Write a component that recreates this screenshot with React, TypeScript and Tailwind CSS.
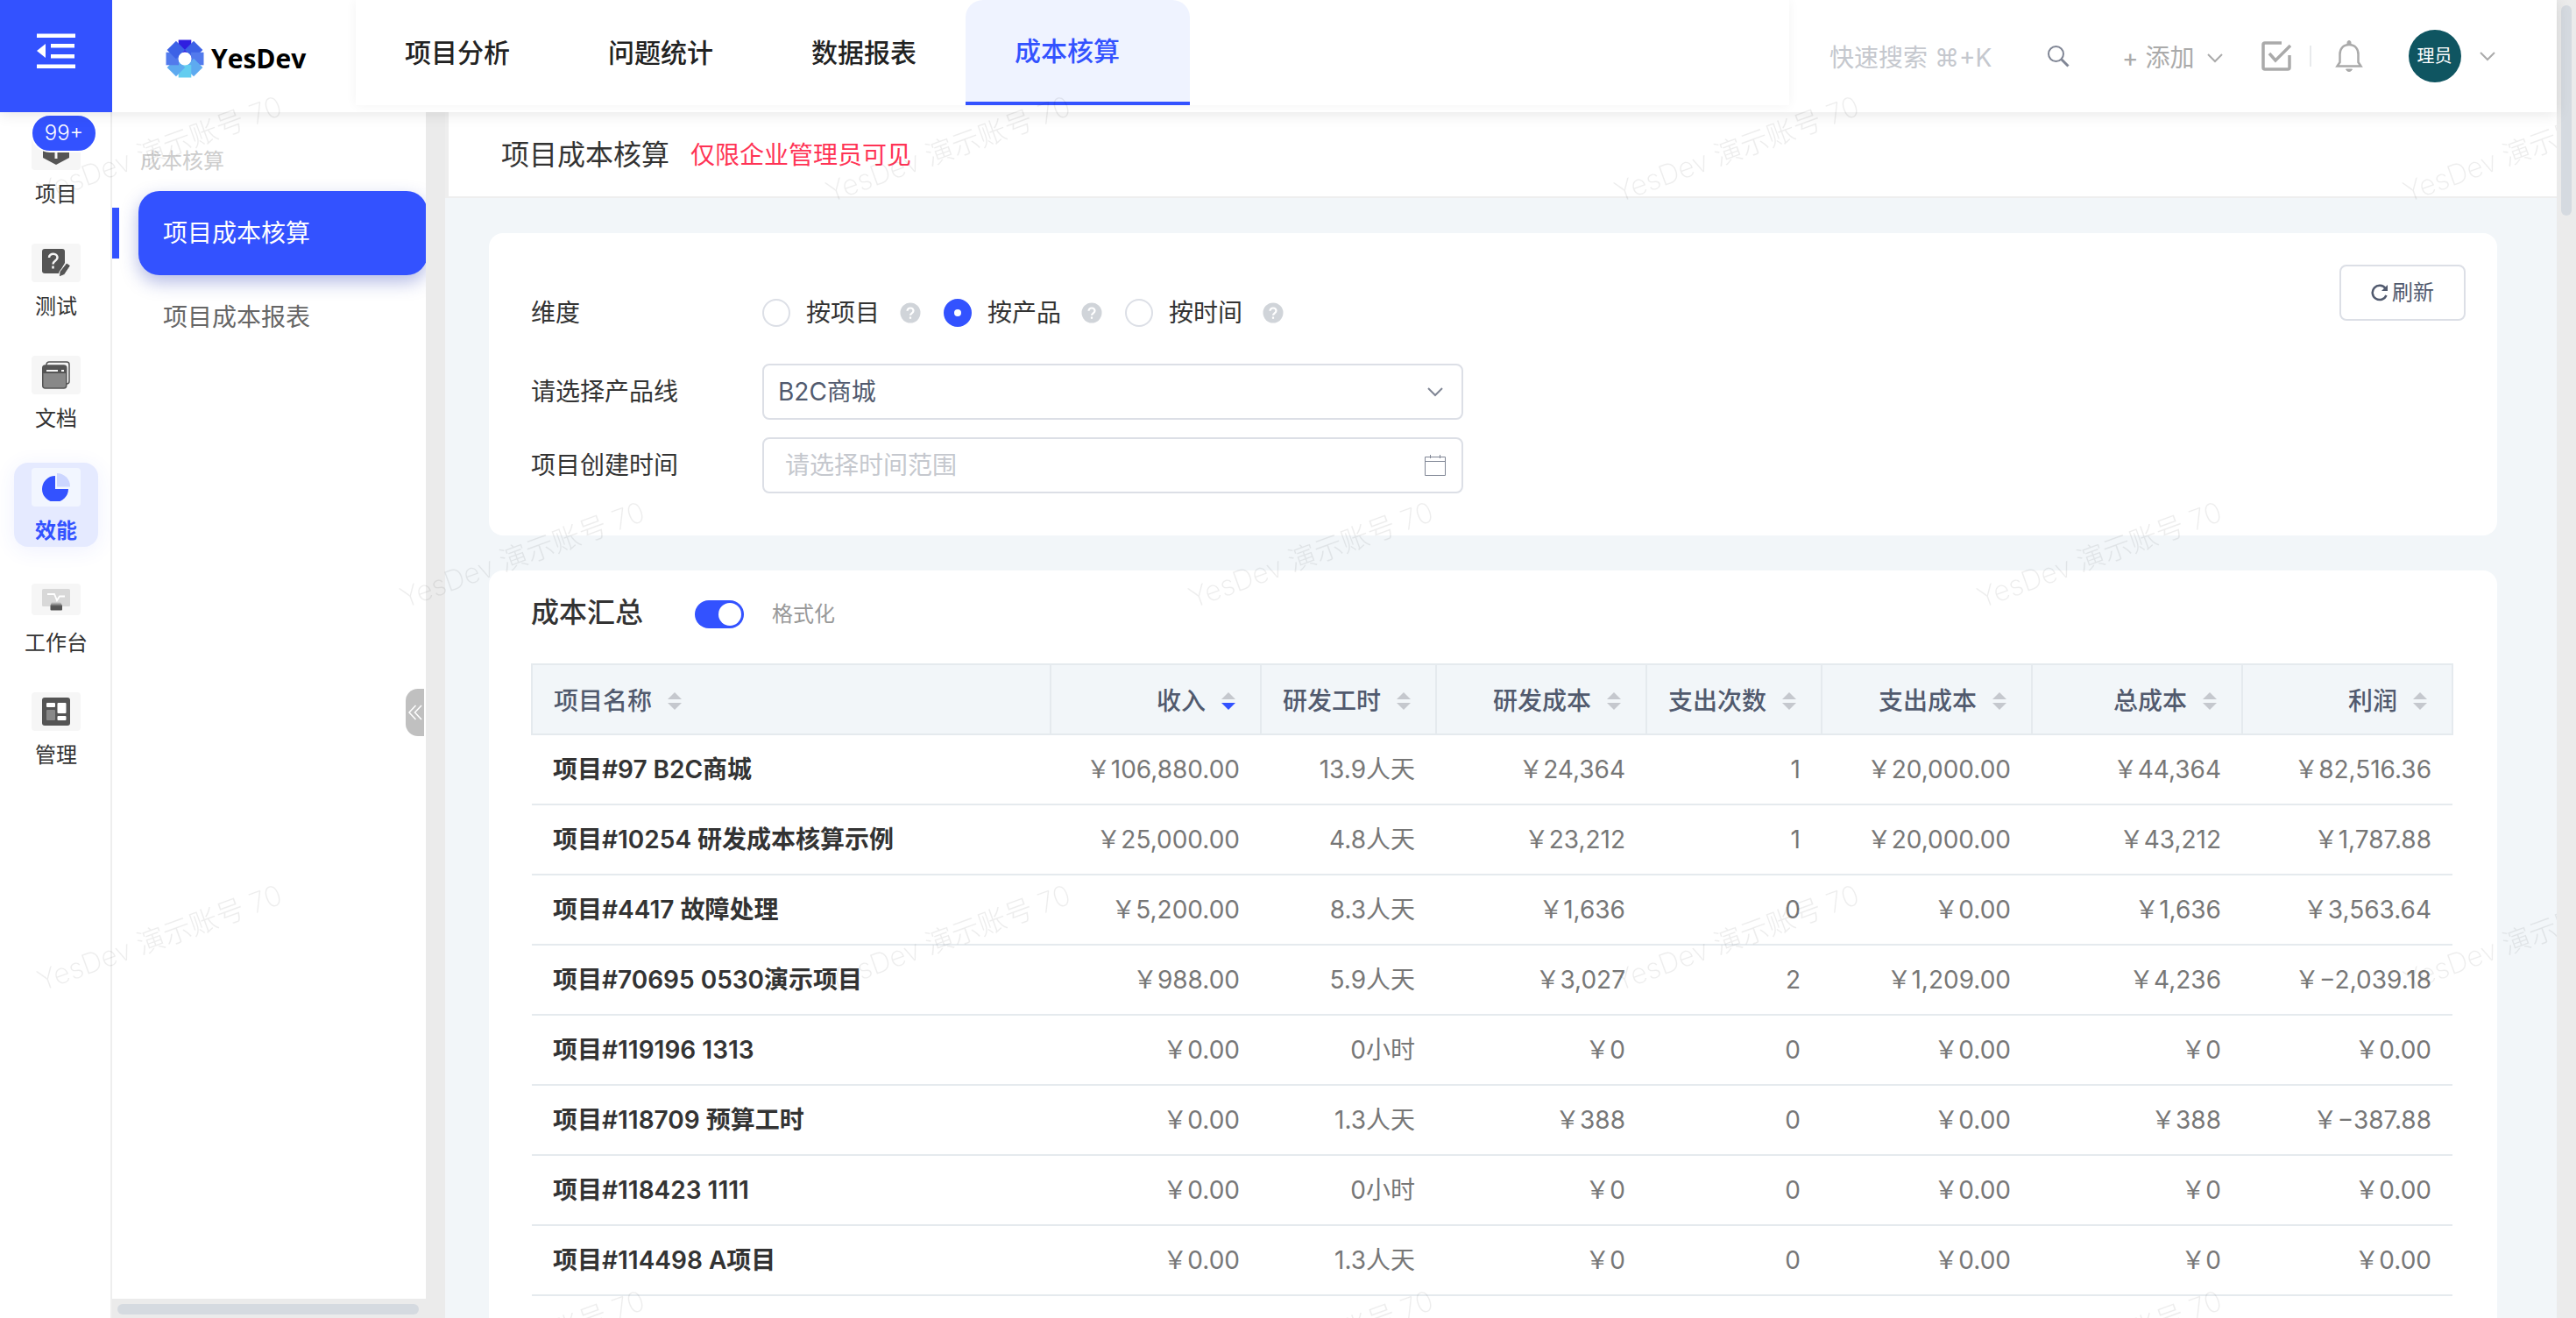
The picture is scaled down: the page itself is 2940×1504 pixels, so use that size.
import React from "react";

const NAV = ["项目分析", "问题统计", "数据报表"];

const COLUMNS = [
  { title: "项目名称", width: "w-auto" },
  { title: "收入", width: "w-[240px]" },
  { title: "研发工时", width: "w-[200px]" },
  { title: "研发成本", width: "w-[240px]" },
  { title: "支出次数", width: "w-[200px]" },
  { title: "支出成本", width: "w-[240px]" },
  { title: "总成本", width: "w-[240px]" },
  { title: "利润", width: "w-[240px]" },
];

const ROWS = [
  ["项目#97 B2C商城", "￥106,880.00", "13.9人天", "￥24,364", "1", "￥20,000.00", "￥44,364", "￥82,516.36"],
  ["项目#10254 研发成本核算示例", "￥25,000.00", "4.8人天", "￥23,212", "1", "￥20,000.00", "￥43,212", "￥1,787.88"],
  ["项目#4417 故障处理", "￥5,200.00", "8.3人天", "￥1,636", "0", "￥0.00", "￥1,636", "￥3,563.64"],
  ["项目#70695 0530演示项目", "￥988.00", "5.9人天", "￥3,027", "2", "￥1,209.00", "￥4,236", "￥−2,039.18"],
  ["项目#119196 1313", "￥0.00", "0小时", "￥0", "0", "￥0.00", "￥0", "￥0.00"],
  ["项目#118709 预算工时", "￥0.00", "1.3人天", "￥388", "0", "￥0.00", "￥388", "￥−387.88"],
  ["项目#118423 1111", "￥0.00", "0小时", "￥0", "0", "￥0.00", "￥0", "￥0.00"],
  ["项目#114498 A项目", "￥0.00", "1.3人天", "￥0", "0", "￥0.00", "￥0", "￥0.00"],
];

function Chevron({ className }: { className: string }) {
  return (
    <svg viewBox="0 0 18 12" className={className} fill="none" stroke="currentColor" strokeWidth="2" aria-hidden="true">
      <path d="M1 2l8 8 8-8" />
    </svg>
  );
}

function Logo() {
  const blades = ["#2f1fe0", "#3d62e6", "#527aec", "#5eaaf0", "#64cdf0", "#5eaaf0", "#527aec", "#3d62e6"];
  return (
    <svg viewBox="-22 -22 44 44" className="size-11" aria-hidden="true">
      {blades.map((c, i) => (
        <path key={i} d="M-7.300 -21.500H7.300V-7H-7.300Z" fill={c} transform={`rotate(${i * 45})`} />
      ))}
      <circle r="7.500" fill="#fff" />
    </svg>
  );
}

function Watermark() {
  return (
    <svg className="pointer-events-none fixed inset-y-0 left-0 z-50 h-full w-full pr-[22px]" aria-hidden="true">
      <defs>
        <pattern id="wm" width="900" height="900" patternUnits="userSpaceOnUse">
          <g className="font-extralight" fontSize="32" fill="#000" fillOpacity="0.07">
            <text transform="translate(48 231) rotate(-20)">YesDev 演示账号 70</text>
            <text transform="translate(462 694) rotate(-20)">YesDev 演示账号 70</text>
          </g>
        </pattern>
      </defs>
      <rect width="100%" height="100%" fill="url(#wm)" />
    </svg>
  );
}

const railIcons: Record<string, React.ReactNode> = {
  项目: (
    <g>
      <path d="M1 8L16 1l15 7v16L16 32 1 24z" fill="#555" />
      <path d="M16 14v11" stroke="#f6f6f6" strokeWidth="3" />
    </g>
  ),
  测试: (
    <g>
      <path d="M3 0h20a3 3 0 013 3v13l-7 12H3a3 3 0 01-3-3V3a3 3 0 013-3z" fill="#555" />
      <path d="M8 10c0-6 10-5.500 9.500 0 0 3.500-5 3.500-5 7.500M12.500 19.500v3" stroke="#f6f6f6" strokeWidth="2.500" fill="none" />
      <path d="M28 16l4.500 3-7 10.500-6 2.500.5-6z" fill="#555" stroke="#f6f6f6" strokeWidth="1" />
    </g>
  ),
  文档: (
    <g>
      <path d="M5 5V4a3 3 0 013-3h20a3 3 0 013 3v19a3 3 0 01-3 3h-1" fill="none" stroke="#555" strokeWidth="1.500" />
      <rect x="0.750" y="5" width="27" height="26" rx="3" fill="#888" stroke="#555" strokeWidth="1.500" />
      <path d="M1 14V8a3 3 0 013-3h21a3 3 0 013 3v6z" fill="#555" />
      <path d="M5 11h13M22 11h3" stroke="#f6f6f6" strokeWidth="2" />
    </g>
  ),
  效能: (
    <g>
      <path d="M15 3v15h15A15 15 0 1115 3z" fill="#3352ff" />
      <path d="M17 0a15 15 0 0115 15.500H17z" fill="#ccd6ff" />
    </g>
  ),
  工作台: (
    <g>
      <defs>
        <linearGradient id="stand" x1="0" x2="0" y1="0" y2="1">
          <stop offset="0" stopColor="#d8d8d8" />
          <stop offset="0.500" stopColor="#555" />
        </linearGradient>
      </defs>
      <rect x="0" y="4" width="32" height="20" rx="1.500" fill="#d8d8d8" />
      <path d="M6 10h8l3 7 3-4.500h6" fill="none" stroke="#fff" strokeWidth="1.800" />
      <path d="M11 19h10l2 4v4.500q0 1-1 1H10.500q-1 0-1-1V23z" fill="url(#stand)" />
    </g>
  ),
  管理: (
    <g>
      <rect width="32" height="32" rx="3" fill="#555" />
      <rect x="5" y="6" width="10" height="5" rx="1" fill="#fff" />
      <rect x="5" y="14" width="10" height="12" rx="1" fill="#888" />
      <rect x="17.500" y="6" width="10" height="12" rx="1" fill="#fff" />
      <rect x="17.500" y="21" width="10" height="5" rx="1" fill="#fff" />
    </g>
  ),
};

function RailItem({ name, active }: { name: string; active?: boolean }) {
  return (
    <a
      href="#"
      className={
        active
          ? "flex h-24 w-24 flex-col items-center justify-between rounded-2xl bg-[#e5eaff] pt-1.5 text-2xl leading-9 font-bold text-[#3352ff] shadow-[0_4px_24px_rgba(51,82,255,0.08)]"
          : "flex h-24 w-24 flex-col items-center justify-between pt-1.5 text-2xl leading-9 text-[#333]"
      }
    >
      <span
        className={
          active
            ? "flex h-11 w-14 items-center justify-center rounded bg-[#f2f6ff]"
            : name === "工作台"
              ? "mt-1 flex h-9 w-14 items-center justify-center rounded bg-[#f6f6f6]"
              : "flex h-11 w-14 items-center justify-center rounded bg-[#f6f6f6]"
        }
      >
        <svg viewBox="0 0 32 32" className="size-8" aria-hidden="true">
          {railIcons[name]}
        </svg>
      </span>
      <span className="whitespace-nowrap">{name}</span>
    </a>
  );
}

function Header() {
  return (
    <header className="relative z-20 flex h-32 shrink-0 bg-white shadow-[0_2px_16px_rgba(0,0,0,0.1)]">
      <button className="flex w-32 shrink-0 justify-center bg-[#3352ff] pt-[37px]" aria-label="收起菜单">
        <svg viewBox="0 0 44 42" className="h-[42px] w-11" fill="#fff" aria-hidden="true">
          <path d="M0 1.500h44v4.500H0zM16 13h27v4.500H16zM16 25h27v4.500H16zM0 36.500h44V41H0zM0 21l10-8v16z" />
        </svg>
      </button>
      <a href="#" className="flex w-[278px] shrink-0 gap-2 pt-[45px] pl-[61px]">
        <Logo />
        <span className="font-['Open_Sans'] text-[30px] leading-[44px] font-bold text-black">YesDev</span>
      </a>
      <nav className="flex h-[120px] flex-1 text-[30px] font-medium shadow-[0_0_12px_rgba(0,0,0,0.05)]">
        {NAV.map((n) => (
          <a key={n} href="#" className="px-14 leading-[120px] text-[#222]">
            {n}
          </a>
        ))}
        <a
          href="#"
          aria-current="page"
          className="rounded-t-[20px] border-b-4 border-[#3352ff] bg-[#eff3ff] pr-20 pl-14 leading-[116px] text-[#3352ff]"
        >
          成本核算
        </a>
      </nav>
      <div className="flex h-32 w-[876px] shrink-0 items-center pl-[46px] text-[28px] text-[#aaa]">
        <input
          aria-label="快速搜索"
          placeholder="快速搜索 ⌘+K"
          className="w-[248px] pt-1 outline-none placeholder:text-[#c5c8ce]"
        />
        <svg viewBox="0 0 26 26" className="size-[26px]" fill="none" stroke="#808695" strokeWidth="2" aria-hidden="true">
          <circle cx="10.500" cy="10.500" r="8.500" />
          <path d="M16.500 16.500l8 8" strokeWidth="3" />
        </svg>
        <button className="ml-[60px] flex items-center pt-1">
          <span className="mr-2">+</span>添加
          <Chevron className="ml-3.5 h-3 w-[18px]" />
        </button>
        <button className="ml-11" aria-label="待办">
          <svg viewBox="0 0 34 34" className="size-[34px]" fill="none" stroke="#aaa" strokeWidth="3.500" aria-hidden="true">
            <path d="M23 2H4a2 2 0 00-2 2v26a2 2 0 002 2h26a2 2 0 002-2V16" />
            <path d="M9 14l7 8L33 5" />
          </svg>
        </button>
        <span className="ml-[21px] h-6 w-0.5 bg-[#e8eaec]" />
        <button className="ml-[27px]" aria-label="通知">
          <svg viewBox="0 0 32 36" className="h-9 w-8" fill="none" stroke="#aaa" strokeWidth="2.500" aria-hidden="true">
            <path d="M16 5C9 5 5.500 10 5.500 16v9l-3 4.500h27l-3-4.500v-9C26.500 10 23 5 16 5z" />
            <path d="M14 4.500V2.500a2 2 0 014 0v2zM12.500 33h7q-1 2.500-3.500 2.500T12.500 33z" fill="#aaa" strokeWidth="1" />
          </svg>
        </button>
        <button className="ml-[52px] flex items-center" aria-label="账号">
          <span className="size-[60px] rounded-full bg-[#0f5561] text-center text-xl leading-[60px] text-white">理员</span>
          <Chevron className="ml-[21px] h-3 w-[18px]" />
        </button>
      </div>
    </header>
  );
}

function Rail() {
  return (
    <aside className="flex w-32 shrink-0 flex-col items-center gap-8 border-r-2 border-[#eee] bg-white pt-4 pl-0.5">
      <div className="relative">
        <RailItem name="项目" />
        <span className="absolute -top-3.5 left-[19px] box-content h-10 w-[72px] rounded-full border-2 border-white bg-[#3352ff] text-center text-2xl leading-10 font-light text-white">
          99+
        </span>
      </div>
      <RailItem name="测试" />
      <RailItem name="文档" />
      <RailItem name="效能" active />
      <RailItem name="工作台" />
      <RailItem name="管理" />
    </aside>
  );
}

function SideMenu() {
  return (
    <aside className="flex w-[380px] shrink-0 flex-col bg-[#ebebeb]">
      <div className="relative mr-[22px] flex-1 overflow-hidden bg-white pt-[38px]">
        <h2 className="pl-8 text-2xl leading-9 text-[#ccc]">成本核算</h2>
        <div className="mt-4 flex items-center">
          <span className="h-[58px] w-2 bg-[#3352ff]" />
          <a
            href="#"
            aria-current="page"
            className="-mr-0.5 ml-[22px] h-24 flex-1 rounded-3xl bg-[#3352ff] pl-7 text-[28px] leading-[96px] text-white shadow-[0_8px_20px_rgba(40,60,180,0.35)]"
          >
            项目成本核算
          </a>
        </div>
        <a href="#" className="block h-24 pl-[58px] text-[28px] leading-[96px] text-[#666]">
          项目成本报表
        </a>
        <button
          aria-label="收起侧栏"
          className="absolute top-[658px] right-0.5 flex h-[54px] w-[21px] items-center justify-center rounded-l-[14px] bg-[#c0c0c0]"
        >
          <svg viewBox="0 0 16 18" className="h-[18px] w-4" fill="none" stroke="#fff" strokeWidth="1.500" aria-hidden="true">
            <path d="M8.500 1L1 9l7.500 8M15 1L7.500 9l7.500 8" />
          </svg>
        </button>
      </div>
      <div className="h-[22px] shrink-0 pt-1.5 pr-[30px] pl-1.5">
        <div className="h-3 rounded-full bg-[#d5dae0]" />
      </div>
    </aside>
  );
}

function Help() {
  return (
    <svg viewBox="0 0 24 24" className="ml-[23px] size-6" aria-hidden="true">
      <circle cx="12" cy="12" r="11.500" fill="#d0d4d9" />
      <path d="M8.500 9.800c0-4.500 7-4.300 7 0 0 2.400-3.500 2.600-3.500 5M12 16.500v2.300" fill="none" stroke="#fff" strokeWidth="2.200" />
    </svg>
  );
}

function Radio({ label, checked }: { label: string; checked?: boolean }) {
  return (
    <div className="flex items-center">
      <label className="flex items-center gap-[18px]">
        <input
          type="radio"
          name="dimension"
          defaultChecked={checked}
          className="size-8 appearance-none rounded-full border-2 border-[#dcdfe6] bg-white checked:border-[12px] checked:border-[#3352ff]"
        />
        {label}
      </label>
      <Help />
    </div>
  );
}

function FilterCard() {
  return (
    <section className="flex items-start justify-between rounded-2xl bg-white pt-9 pr-9 pb-12 pl-12 text-[28px] text-[#333]">
      <div>
        <div className="flex h-[110px] items-center">
          <span className="w-[264px]">维度</span>
          <div className="flex gap-[26px]">
            <Radio label="按项目" />
            <Radio label="按产品" checked />
            <Radio label="按时间" />
          </div>
        </div>
        <div className="mt-[3px] flex items-center">
          <label htmlFor="line" className="w-[264px]">
            请选择产品线
          </label>
          <div className="relative w-[800px]">
            <select
              id="line"
              className="h-16 w-full appearance-none rounded-lg border-2 border-[#dcdfe6] bg-white pl-4 text-[#515a6e]"
            >
              <option>B2C商城</option>
            </select>
            <Chevron className="pointer-events-none absolute top-[26px] right-[23px] h-3 w-[18px] text-[#808695]" />
          </div>
        </div>
        <div className="mt-5 flex items-center">
          <label htmlFor="range" className="w-[264px]">
            项目创建时间
          </label>
          <div className="relative w-[800px]">
            <input
              id="range"
              placeholder="请选择时间范围"
              className="h-16 w-full rounded-lg border-2 border-[#dcdfe6] bg-white pl-6 placeholder:text-[#c5c8ce]"
            />
            <svg
              viewBox="0 0 24 24"
              className="pointer-events-none absolute top-5 right-5 size-6"
              fill="none"
              stroke="#808695"
              strokeWidth="1"
              aria-hidden="true"
            >
              <path d="M0.500 2.500h23v21H0.500zM0.500 7.500h23M6.500 0v4M17.500 0v4" />
            </svg>
          </div>
        </div>
      </div>
      <button className="flex h-16 w-36 items-center justify-center gap-1 rounded-lg border-2 border-[#dcdfe6] text-2xl text-[#515a6e]">
        <svg viewBox="0 0 20 20" className="size-5" fill="none" stroke="currentColor" strokeWidth="2.500" aria-hidden="true">
          <path d="M17.500 13a8.200 8.200 0 11-1-8" />
          <path d="M19 1v7h-7z" fill="currentColor" stroke="none" />
        </svg>
        刷新
      </button>
    </section>
  );
}

function Sorter({ desc }: { desc?: boolean }) {
  return (
    <svg viewBox="0 0 16 20" className="h-5 w-4" fill="#c5c8ce" aria-hidden="true">
      <path d="M8 0l8 8H0z" />
      <path d="M0 12h16l-8 8z" fill={desc ? "#3352ff" : "#c5c8ce"} />
    </svg>
  );
}

function SummaryCard() {
  return (
    <section className="mt-10 flex-1 rounded-t-2xl bg-white pt-6 pr-[50px] pl-12">
      <div className="flex h-12 items-center">
        <h2 className="text-[32px] leading-[48px] font-medium text-[#333]">成本汇总</h2>
        <label className="mt-1 ml-[59px] flex items-center gap-8 text-2xl text-[#999]">
          <input
            type="checkbox"
            role="switch"
            defaultChecked
            className="flex h-8 w-14 appearance-none items-center justify-end rounded-full bg-[#3352ff] px-[3px] before:size-[26px] before:rounded-full before:bg-white"
          />
          格式化
        </label>
      </div>
      <table className="mt-[34px] w-full table-fixed border-collapse text-[28px]">
        <thead>
          <tr className="h-20 bg-[#f2f6f9] text-[#515a6e]">
            {COLUMNS.map((c, i) => (
              <th key={c.title} className={`${c.width} border-2 border-[#e5eaee] px-6 pt-1 font-medium`}>
                <button className={i === 0 ? "flex items-center gap-[18px]" : "ml-auto flex items-center gap-[18px] pr-1"}>
                  {c.title}
                  <Sorter desc={i === 1} />
                </button>
              </th>
            ))}
          </tr>
        </thead>
        <tbody>
          {ROWS.map((r) => (
            <tr key={r[0]} className="h-20 border-b-2 border-[#e5eaee] text-[#777]">
              {r.map((v, i) => (
                <td key={i} className={i === 0 ? "px-6 font-semibold text-[#333]" : "px-6 text-right"}>
                  {v}
                </td>
              ))}
            </tr>
          ))}
        </tbody>
      </table>
    </section>
  );
}

export default function App() {
  return (
    <div className="flex h-screen overflow-hidden bg-white font-[Inter,'Noto_Sans_CJK_SC',sans-serif]">
      <div className="flex min-w-0 flex-1 flex-col">
        <Header />
        <div className="flex min-h-0 flex-1">
          <Rail />
          <SideMenu />
          <main className="flex min-w-0 flex-1 flex-col overflow-hidden bg-[#f2f6f9]">
            <div className="flex h-[98px] shrink-0 items-center gap-6 border-b-2 border-l-4 border-[#eee] bg-white pt-0.5 pl-[60px]">
              <h1 className="text-[32px] text-[#333]">项目成本核算</h1>
              <span className="text-[28px] text-[#ff3355]">仅限企业管理员可见</span>
            </div>
            <div className="flex min-h-0 flex-1 flex-col pt-10 pr-[68px] pl-[50px]">
              <FilterCard />
              <SummaryCard />
            </div>
          </main>
        </div>
      </div>
      <div className="w-[22px] shrink-0 bg-[#ebebeb] px-[5px] pt-1.5">
        <div className="h-60 rounded-full bg-[#d5dae0]" />
      </div>
      <Watermark />
    </div>
  );
}
